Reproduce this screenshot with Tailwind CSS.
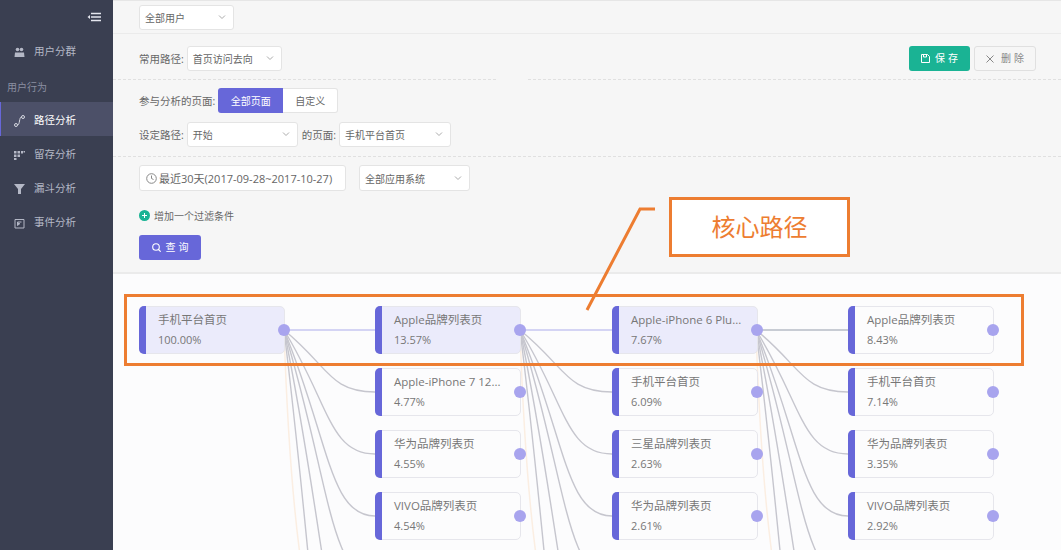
<!DOCTYPE html>
<html lang="en">
<head>
    <meta charset="UTF-8">
    <title>路径分析</title>
    <script src="https://cdn.jsdelivr.net/npm/@tailwindcss/browser@4"></script>
</head>
<body class="w-[1061px] h-[550px] overflow-hidden flex bg-[#f6f6f6] text-[10.5px] text-[#666] font-['Open_Sans','Noto_Sans_CJK_SC',sans-serif]">
    <!-- sidebar -->
    <aside class="w-[113px] h-full shrink-0 bg-[#3a3f51] text-[#b4b8c6]">
        <div class="h-[34px] flex items-center justify-end pr-[12px]">
            <svg width="14" height="10" viewBox="0 0 14 10" fill="none" stroke="#e4e6ee" stroke-width="1.6"><path d="M4 1.5h10M4 5h10M4 8.5h10"/><path d="M3 3 0.5 5 3 7z" fill="#e4e6ee" stroke="none"/></svg>
        </div>
        <a class="h-[34px] flex items-center pl-[14px] pt-[2px] gap-[9px]">
            <svg width="11" height="11" viewBox="0 0 11 11" fill="#b4b8c6"><circle cx="3.500" cy="2.500" r="1.800"/><circle cx="7.500" cy="2.500" r="1.800"/><path d="M1 5.500h4.500V10H0.500zM5.500 5.500H10l.5 4.500h-5z"/></svg>
            <span>用户分群</span>
        </a>
        <div class="h-[34px] pl-[7px] pt-[12px] text-[10px] text-[#8a8fa1]">用户行为</div>
        <a class="h-[34px] flex items-center pl-[13px] pt-[4px] gap-[9px] bg-[#4c5068] border-l border-[#6767d9] text-white">
            <svg width="11" height="12" viewBox="0 0 11 12" fill="none" stroke="#d5d7e0"><circle cx="2" cy="10" r="1.500"/><circle cx="9" cy="2" r="1.500"/><path d="M3.500 10C6 10 5 2 7.500 2"/></svg>
            <span>路径分析</span>
        </a>
        <a class="h-[34px] flex items-center pl-[14px] pt-[4px] gap-[9px]">
            <svg width="11" height="9" viewBox="0 0 11 9" fill="#b4b8c6"><path d="M0 0h2.500v2.500H0zM3.500 0H6v2.500H3.500zM7 0h2v2.500H7zM9.500 0H11v1.500H9.500zM0 3.500h2.500V6H0zM3.500 3.500H6V6H3.500zM0 7h2.500v2H0z"/></svg>
            <span>留存分析</span>
        </a>
        <a class="h-[34px] flex items-center pl-[14px] pt-[4px] gap-[9px]">
            <svg width="11" height="10" viewBox="0 0 11 10" fill="#b4b8c6"><path d="M0 0h11L7 5v5H4V5z"/></svg>
            <span>漏斗分析</span>
        </a>
        <a class="h-[34px] flex items-center pl-[14px] pt-[4px] gap-[9px]">
            <svg width="11" height="11" viewBox="0 0 11 11" fill="none" stroke="#b4b8c6"><path d="M1 1.500h9v8.500H1z"/><path d="M3.500 4h4M3.500 4v3.500L6 5.500" fill="#b4b8c6"/></svg>
            <span>事件分析</span>
        </a>
    </aside>

    <main class="flex-1 h-full flex flex-col border-t border-[#e6e6e6]">
        <!-- filters -->
        <section class="h-[273px] shrink-0 border-b-2 border-[#ebebeb] pl-[26px] [&_div>span]:pt-[2px]">
            <div class="h-[33px] -ml-[26px] pl-[26px] pt-[1px] border-b border-[#ebebeb] flex items-center">
                <div class="w-[95px] h-[25px] bg-white border border-[#e4e4e4] rounded-[3px] flex items-center justify-between pl-[5px] pr-[7px] text-[10px]">
                    <span>全部用户</span><svg width="8" height="5" viewBox="0 0 8 5" fill="none" stroke="#aaa"><path d="M1 .5l3 3 3-3"/></svg>
                </div>
            </div>
            <div class="relative h-[46px] -ml-[26px] pl-[26px] pr-[25px] pt-[4px] border-b border-dashed border-[#e0e0e0] flex items-center justify-between">
                <div class="flex items-center gap-[3px]">
                    <span>常用路径:</span>
                    <div class="w-[95px] h-[25px] bg-white border border-[#e4e4e4] rounded-[3px] flex items-center justify-between pl-[5px] pr-[7px] text-[10px]">
                        <span>首页访问去向</span><svg width="8" height="5" viewBox="0 0 8 5" fill="none" stroke="#aaa"><path d="M1 .5l3 3 3-3"/></svg>
                    </div>
                </div>
                <div class="flex items-center gap-[4px] text-[10px]">
                    <button class="w-[61px] h-[25px] pl-[3px] rounded-[3px] bg-[#1ab394] text-white flex items-center justify-center gap-[5px]">
                        <svg width="9" height="9" viewBox="0 0 9 9" fill="none" stroke="#fff"><path d="M.5.500h6l2 2v6h-8z"/><path d="M2.500 .5v2.500h3V.5"/></svg>
                        <span class="tracking-[3px]">保存</span>
                    </button>
                    <button class="w-[62px] h-[25px] pl-[3px] rounded-[3px] bg-[#f6f6f6] border border-[#e0e0e0] text-[#888] flex items-center justify-center gap-[7px]">
                        <svg width="8" height="8" viewBox="0 0 8 8" fill="none" stroke="#888"><path d="M.5.500l7 7M7.500.5l-7 7"/></svg>
                        <span class="tracking-[3px]">删除</span>
                    </button>
                </div>
                <i class="absolute left-[385px] -bottom-px w-[30px] h-[1px] bg-[#f6f6f6]"></i>
            </div>
            <div class="h-[77px] -ml-[26px] pl-[26px] border-b border-dashed border-[#e0e0e0] pt-[8px] flex flex-col gap-[9px]">
                <div class="flex items-center gap-[3px]">
                    <span>参与分析的页面:</span>
                    <div class="flex h-[25px] text-[10px]">
                        <span class="w-[65px] bg-[#6767d9] text-white rounded-l-[3px] flex items-center justify-center">全部页面</span>
                        <span class="w-[55px] bg-white border border-l-0 border-[#e4e4e4] rounded-r-[3px] flex items-center justify-center">自定义</span>
                    </div>
                </div>
                <div class="flex items-center">
                    <span class="mr-[3px]">设定路径:</span>
                    <div class="w-[111px] h-[25px] bg-white border border-[#e4e4e4] rounded-[3px] flex items-center justify-between pl-[5px] pr-[7px] text-[10px] mr-[4px]">
                        <span>开始</span><svg width="8" height="5" viewBox="0 0 8 5" fill="none" stroke="#aaa"><path d="M1 .5l3 3 3-3"/></svg>
                    </div>
                    <span class="mr-[3px]">的页面:</span>
                    <div class="w-[112px] h-[25px] bg-white border border-[#e4e4e4] rounded-[3px] flex items-center justify-between pl-[5px] pr-[7px] text-[10px]">
                        <span>手机平台首页</span><svg width="8" height="5" viewBox="0 0 8 5" fill="none" stroke="#aaa"><path d="M1 .5l3 3 3-3"/></svg>
                    </div>
                </div>
            </div>
            <div class="pt-[8px] flex items-center gap-[13px]">
                <div class="w-[207px] h-[26px] bg-white border border-[#e4e4e4] rounded-[3px] flex items-center px-[6px] gap-[2px] text-[11px]">
                    <svg width="11" height="11" viewBox="0 0 11 11" fill="none" stroke="#888"><circle cx="5.500" cy="5.500" r="4.800"/><path d="M5.500 2.500v3l2 1"/></svg>
                    <span>最近30天(2017-09-28~2017-10-27)</span>
                </div>
                <div class="w-[111px] h-[26px] bg-white border border-[#e4e4e4] rounded-[3px] flex items-center justify-between pl-[5px] pr-[7px] text-[10px]">
                    <span>全部应用系统</span><svg width="8" height="5" viewBox="0 0 8 5" fill="none" stroke="#aaa"><path d="M1 .5l3 3 3-3"/></svg>
                </div>
            </div>
            <div class="mt-[17px] flex items-center gap-[4px] text-[10px] h-[14px]">
                <svg width="11" height="11" viewBox="0 0 11 11"><circle cx="5.500" cy="5.500" r="5.500" fill="#1ab394"/><path d="M5.500 3v5M3 5.500h5" stroke="#fff"/></svg>
                <span>增加一个过滤条件</span>
            </div>
            <button class="mt-[13px] w-[62px] h-[25px] pl-[3px] rounded-[3px] bg-[#6767d9] text-white text-[10px] flex items-center justify-center gap-[5px]">
                <svg width="9" height="9" viewBox="0 0 9 9" fill="none" stroke="#fff" stroke-width="1.100"><circle cx="4" cy="4" r="3.300"/><path d="M6.500 6.500 8.700 8.700"/></svg>
                <span class="tracking-[3px]">查询</span>
            </button>
        </section>

        <!-- path diagram, coordinates relative to this canvas -->
        <section id="canvas" class="relative flex-1 bg-[#fcfcfd] overflow-hidden">
            <svg id="links" class="absolute left-0 top-0" width="948" height="276" fill="none"></svg>
            <div id="nodes"></div>
        </section>
    </main>

    <!-- annotation overlay -->
    <div class="absolute left-[124px] top-[294px] w-[900px] h-[72px] border-[3px] border-[#ed7d31]"></div>
    <div class="absolute left-[669px] top-[197px] w-[181px] h-[60px] border-[3px] border-[#ed7d31] bg-white flex items-center justify-center text-[24px] text-[#ed7d31]">核心路径</div>
    <svg class="absolute left-0 top-0 pointer-events-none" width="1061" height="550" fill="none"><path d="M655 209H640L587 310" stroke="#ed7d31" stroke-width="3"/></svg>

    <script>
        var columns = [
            { x: 26, rows: [['手机平台首页', '100.00%', true]] },
            { x: 262, rows: [['Apple品牌列表页', '13.57%', true], ['Apple-iPhone 7 12...', '4.77%'], ['华为品牌列表页', '4.55%'], ['VIVO品牌列表页', '4.54%']] },
            { x: 499, rows: [['Apple-iPhone 6 Plu...', '7.67%', true], ['手机平台首页', '6.09%'], ['三星品牌列表页', '2.63%'], ['华为品牌列表页', '2.61%']] },
            { x: 735, rows: [['Apple品牌列表页', '8.43%'], ['手机平台首页', '7.14%'], ['华为品牌列表页', '3.35%'], ['VIVO品牌列表页', '2.92%']] }
        ];
        var top0 = 32, step = 62;
        var nodes = document.getElementById('nodes');
        var html = '';
        columns.forEach(function (col) {
            col.rows.forEach(function (row, i) {
                var bg = row[2] ? 'bg-[#ebebfb]' : 'bg-[#fcfcfd]';
                html += '<div class="absolute w-[146px] h-[48px] rounded-[5px] border border-[#e6e6ec] flex ' + bg + '" style="left:' + col.x + 'px;top:' + (top0 + i * step) + 'px">'
                    + '<i class="w-[7px] -my-px -ml-px rounded-l-[5px] bg-[#6767d9]"></i>'
                    + '<div class="pl-[12px] pt-[3px] leading-[20px] text-[#777]"><div class="whitespace-nowrap text-[11.5px]">' + row[0] + '</div><div class="text-[11px]">' + row[1] + '</div></div>'
                    + '<b class="absolute right-[-6px] top-[17px] w-[12px] h-[12px] rounded-full bg-[#a8a4ee]"></b></div>';
            });
        });
        nodes.innerHTML = html;

        // links fan out from each dot of the top row
        var links = '';
        [[171, 262], [407, 499], [643, 735]].forEach(function (pair, c) {
            var x0 = pair[0], x1 = pair[1], y0 = 56, dx = x1 - x0;
            links += '<path d="M' + x0 + ' ' + y0 + 'C' + (x0 + 2) + ' ' + (y0 + 60) + ' ' + (x0 + 6) + ' ' + (y0 + 150) + ' ' + (x0 + 16) + ' ' + (y0 + 225) + '" stroke="#fbeee2" stroke-width="1.500"/>';
            [10, 6, 4, 3, 2, 1].forEach(function (r) {
                var y1 = y0 + r * step;
                links += '<path d="M' + x0 + ' ' + y0 + 'C' + (x0 + dx * 0.5) + ' ' + (y0 + (y1 - y0) * 0.6) + ' ' + (x0 + dx * 0.5) + ' ' + y1 + ' ' + x1 + ' ' + y1 + '" stroke="#c6c6ce" stroke-width="1.400"/>';
            });
            links += '<path d="M' + x0 + ' ' + y0 + 'H' + x1 + '" stroke="' + (c == 2 ? '#c8ccd4' : '#d4d4f4') + '" stroke-width="2"/>';
        });
        document.getElementById('links').innerHTML = links;
    </script>
</body>
</html>
